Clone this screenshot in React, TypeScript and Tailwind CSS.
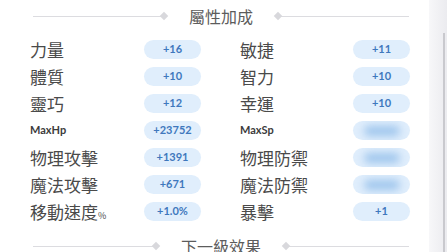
const rows: [string, string, string, string][] = [
  ['力量', '+16', '敏捷', '+11'],
  ['體質', '+10', '智力', '+10'],
  ['靈巧', '+12', '幸運', '+10'],
  ['MaxHp', '+23752', 'MaxSp', ''],
  ['物理攻擊', '+1391', '物理防禦', ''],
  ['魔法攻擊', '+671', '魔法防禦', ''],
  ['移動速度%', '+1.0%', '暴擊', '+1'],
];

const cjk = { fontFamily: '"Noto Sans CJK TC", "Noto Sans", sans-serif' };
const num = { fontFamily: 'Lato, "Noto Sans", sans-serif' };

const Divider = ({ title }: { title: string }) => (
  <div className="flex h-[34px] items-center pl-[33px] pr-[20px]">
    <div className="h-px flex-1 bg-[#dcdce0]" />
    <div className="h-[6px] w-[6px] rotate-45 bg-[#d8d8dc]" />
    <div className="px-[22px] text-[16px] text-[#5c5c5c]" style={cjk}>
      {title}
    </div>
    <div className="h-[6px] w-[6px] rotate-45 bg-[#d8d8dc]" />
    <div className="h-px flex-1 bg-[#dcdce0]" />
  </div>
);

const Label = ({ text }: { text: string }) => {
  if (text.startsWith('Max')) {
    return (
      <div className="text-[11px] font-bold text-[#3c3c3c]" style={num}>
        {text}
      </div>
    );
  }
  if (text.endsWith('%')) {
    return (
      <div className="text-[17px] text-[#4a4a4a]" style={cjk}>
        {text.slice(0, -1)}
        <span className="text-[9px]">%</span>
      </div>
    );
  }
  return (
    <div className="text-[17px] text-[#4a4a4a]" style={cjk}>
      {text}
    </div>
  );
};

const Pill = ({ value }: { value: string }) => (
  <div className="flex h-[19px] w-[57px] items-center justify-center overflow-hidden rounded-full bg-[#e0eefc]">
    {value ? (
      <span className="text-[11px] font-bold text-[#3f78bd]" style={num}>
        {value}
      </span>
    ) : (
      <div className="h-[10px] w-[36px] rounded-full bg-[#9cc4ec] blur-[4px]" />
    )}
  </div>
);

export default function App() {
  return (
    <div className="flex h-[252px] w-[447px] overflow-hidden bg-white">
      <div className="w-[429px] -mt-px">
        <Divider title="屬性加成" />
        <div className="grid grid-cols-[114px_57px_39px_113px_57px] pl-[30px] pt-[3px]">
          {rows.map(([l1, v1, l2, v2]) => (
            <div key={l1} className="contents">
              <div className="flex h-[27px] items-center">
                <Label text={l1} />
              </div>
              <div className="flex h-[27px] items-center">
                <Pill value={v1} />
              </div>
              <div />
              <div className="flex h-[27px] items-center">
                <Label text={l2} />
              </div>
              <div className="flex h-[27px] items-center">
                <Pill value={v2} />
              </div>
            </div>
          ))}
        </div>
        <div className="pt-[4px]">
          <Divider title="下一級效果" />
        </div>
      </div>
      <div className="flex flex-1 bg-gradient-to-r from-[#f7f7f9] to-[#ebebef]">
        <div className="ml-auto mr-[2px] mt-[33px] w-[2px] bg-[#c9c9ce]" />
      </div>
    </div>
  );
}
